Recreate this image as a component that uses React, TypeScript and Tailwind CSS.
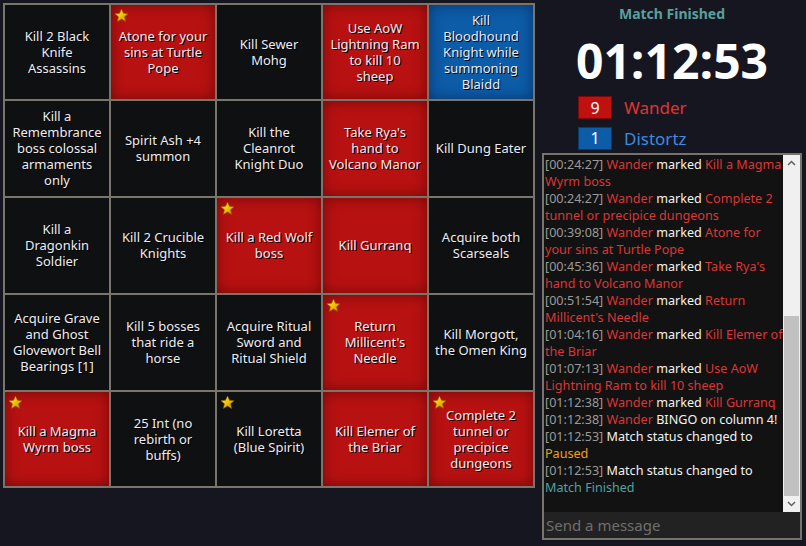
import React from "react";

type Cell = { lines: string[]; color: "black" | "red" | "blue"; star?: boolean };

const cells: Cell[] = [
  { lines: ["Kill 2 Black", "Knife", "Assassins"], color: "black" },
  { lines: ["Atone for your", "sins at Turtle", "Pope"], color: "red", star: true },
  { lines: ["Kill Sewer", "Mohg"], color: "black" },
  { lines: ["Use AoW", "Lightning Ram", "to kill 10", "sheep"], color: "red" },
  { lines: ["Kill", "Bloodhound", "Knight while", "summoning", "Blaidd"], color: "blue" },
  { lines: ["Kill a", "Remembrance", "boss colossal", "armaments", "only"], color: "black" },
  { lines: ["Spirit Ash +4", "summon"], color: "black" },
  { lines: ["Kill the", "Cleanrot", "Knight Duo"], color: "black" },
  { lines: ["Take Rya's", "hand to", "Volcano Manor"], color: "red" },
  { lines: ["Kill Dung Eater"], color: "black" },
  { lines: ["Kill a", "Dragonkin", "Soldier"], color: "black" },
  { lines: ["Kill 2 Crucible", "Knights"], color: "black" },
  { lines: ["Kill a Red Wolf", "boss"], color: "red", star: true },
  { lines: ["Kill Gurranq"], color: "red" },
  { lines: ["Acquire both", "Scarseals"], color: "black" },
  { lines: ["Acquire Grave", "and Ghost", "Glovewort Bell", "Bearings [1]"], color: "black" },
  { lines: ["Kill 5 bosses", "that ride a", "horse"], color: "black" },
  { lines: ["Acquire Ritual", "Sword and", "Ritual Shield"], color: "black" },
  { lines: ["Return", "Millicent's", "Needle"], color: "red", star: true },
  { lines: ["Kill Morgott,", "the Omen King"], color: "black" },
  { lines: ["Kill a Magma", "Wyrm boss"], color: "red", star: true },
  { lines: ["25 Int (no", "rebirth or", "buffs)"], color: "black" },
  { lines: ["Kill Loretta", "(Blue Spirit)"], color: "black", star: true },
  { lines: ["Kill Elemer of", "the Briar"], color: "red" },
  { lines: ["Complete 2", "tunnel or", "precipice", "dungeons"], color: "red", star: true },
];

const Star = () => (
  <svg width="15" height="15" viewBox="0 0 24 24" className="absolute left-[3px] top-[3px]">
    <defs>
      <linearGradient id="sg" x1="0" y1="0" x2="1" y2="1">
        <stop offset="0" stopColor="#fff6a0" />
        <stop offset="0.45" stopColor="#f5c800" />
        <stop offset="1" stopColor="#c98a00" />
      </linearGradient>
    </defs>
    <path
      d="M12 1.5l3.1 6.9 7.4.7-5.6 5 1.7 7.4L12 17.6l-6.6 3.9 1.7-7.4-5.6-5 7.4-.7z"
      fill="url(#sg)"
      stroke="#8a5a00"
      strokeWidth="1"
      strokeLinejoin="round"
    />
  </svg>
);

const bgFor = (c: Cell["color"]) =>
  c === "red"
    ? "bg-[#b81111] shadow-[inset_0_0_14px_rgba(60,0,0,0.55)]"
    : c === "blue"
    ? "bg-[#0d5ca8] shadow-[inset_0_0_14px_rgba(0,20,60,0.55)]"
    : "bg-[#0f1011]";

type Seg = { t: string; c: "ts" | "red" | "white" | "orange" | "teal" };
type Msg = Seg[][];

const msgs: Msg[] = [
  [[{ t: "[00:24:27] ", c: "ts" }, { t: "Wander ", c: "red" }, { t: "marked ", c: "white" }, { t: "Kill a Magma", c: "red" }], [{ t: "Wyrm boss", c: "red" }]],
  [[{ t: "[00:24:27] ", c: "ts" }, { t: "Wander ", c: "red" }, { t: "marked ", c: "white" }, { t: "Complete 2", c: "red" }], [{ t: "tunnel or precipice dungeons", c: "red" }]],
  [[{ t: "[00:39:08] ", c: "ts" }, { t: "Wander ", c: "red" }, { t: "marked ", c: "white" }, { t: "Atone for", c: "red" }], [{ t: "your sins at Turtle Pope", c: "red" }]],
  [[{ t: "[00:45:36] ", c: "ts" }, { t: "Wander ", c: "red" }, { t: "marked ", c: "white" }, { t: "Take Rya's", c: "red" }], [{ t: "hand to Volcano Manor", c: "red" }]],
  [[{ t: "[00:51:54] ", c: "ts" }, { t: "Wander ", c: "red" }, { t: "marked ", c: "white" }, { t: "Return", c: "red" }], [{ t: "Millicent's Needle", c: "red" }]],
  [[{ t: "[01:04:16] ", c: "ts" }, { t: "Wander ", c: "red" }, { t: "marked ", c: "white" }, { t: "Kill Elemer of", c: "red" }], [{ t: "the Briar", c: "red" }]],
  [[{ t: "[01:07:13] ", c: "ts" }, { t: "Wander ", c: "red" }, { t: "marked ", c: "white" }, { t: "Use AoW", c: "red" }], [{ t: "Lightning Ram to kill 10 sheep", c: "red" }]],
  [[{ t: "[01:12:38] ", c: "ts" }, { t: "Wander ", c: "red" }, { t: "marked ", c: "white" }, { t: "Kill Gurranq", c: "red" }]],
  [[{ t: "[01:12:38] ", c: "ts" }, { t: "Wander ", c: "red" }, { t: "BINGO on column 4!", c: "white" }]],
  [[{ t: "[01:12:53] ", c: "ts" }, { t: "Match status changed to", c: "white" }], [{ t: "Paused", c: "orange" }]],
  [[{ t: "[01:12:53] ", c: "ts" }, { t: "Match status changed to", c: "white" }], [{ t: "Match Finished", c: "teal" }]],
];

const segClass: Record<Seg["c"], string> = {
  ts: "text-[#9a9a9a]",
  red: "text-[#dc3636]",
  white: "text-[#f2f2f2]",
  orange: "text-[#f0a010]",
  teal: "text-[#4fa3a0]",
};

export default function App() {
  return (
    <div
      className="flex h-[546px] w-[806px] overflow-hidden bg-[#151620]"
      style={{ fontFamily: '"Noto Sans", "Open Sans", sans-serif' }}
    >
      <div className="ml-[3px] mt-[3px] self-start">
        <div className="grid grid-cols-[repeat(5,104px)] grid-rows-[94px_95px_95px_95px_94px] gap-[2px] bg-[#7a756b] p-[2px]">
          {cells.map((c, i) => (
            <div
              key={i}
              className={`relative flex items-center justify-center pb-[1px] text-center text-[13px] leading-[16px] text-[#ececf2] [text-shadow:1px_1px_0_#000] ${bgFor(c.color)}`}
            >
              {c.star && <Star />}
              <div>
                {c.lines.map((l, j) => (
                  <div key={j} className="whitespace-nowrap">
                    {l}
                  </div>
                ))}
              </div>
            </div>
          ))}
        </div>
      </div>

      <div className="ml-[7px] flex w-[260px] flex-col">
        <div className="mt-[5px] text-center text-[14px] font-bold leading-[18px] text-[#5aa09c]">Match Finished</div>
        <div
          className="mt-[10px] text-center text-[48px] font-bold leading-[56px] text-white"
          style={{ fontFamily: '"Open Sans", "Noto Sans", sans-serif' }}
        >
          01:12:53
        </div>
        <div className="ml-[36px] mt-[6px] flex flex-col gap-[5px]">
          <div className="flex items-center">
            <div className="flex h-[23px] w-[34px] items-center justify-center border border-[#7a0a0a] bg-[#c01111] text-[16px] text-white">9</div>
            <div className="ml-[12px] text-[17px] text-[#e03434]">Wander</div>
          </div>
          <div className="flex items-center">
            <div className="flex h-[23px] w-[34px] items-center justify-center border border-[#083a70] bg-[#0d5ca8] text-[16px] text-white">1</div>
            <div className="ml-[12px] text-[17px] text-[#3b8be0]">Distortz</div>
          </div>
        </div>

        <div className="mt-[2px] flex h-[387px] flex-col border-2 border-[#77736b] bg-[#121212]">
          <div className="flex min-h-0 flex-1">
            <div className="flex-1 pl-[1px] pt-[1px] text-[12.6px] leading-[17px]">
              {msgs.map((m, i) => (
                <div key={i}>
                  {m.map((line, j) => (
                    <div key={j} className="whitespace-nowrap">
                      {line.map((s, k) => (
                        <span key={k} className={segClass[s.c]}>
                          {s.t}
                        </span>
                      ))}
                    </div>
                  ))}
                </div>
              ))}
            </div>
            <div className="flex w-[17px] flex-col bg-[#f0f0f0]">
              <div className="flex h-[17px] items-center justify-center">
                <svg width="9" height="6" viewBox="0 0 9 6">
                  <path d="M1 5L4.5 1.5L8 5" stroke="#606060" strokeWidth="1.5" fill="none" />
                </svg>
              </div>
              <div className="flex-1 px-[1px]">
                <div className="mt-[145px] h-[180px] bg-[#c1c1c1]" />
              </div>
              <div className="flex h-[17px] items-center justify-center">
                <svg width="9" height="6" viewBox="0 0 9 6">
                  <path d="M1 1L4.5 4.5L8 1" stroke="#606060" strokeWidth="1.5" fill="none" />
                </svg>
              </div>
            </div>
          </div>
          <div className="h-[26px] bg-[#222222] pl-[2px] text-[15px] leading-[26px] text-[#6f6f6f]">Send a message</div>
        </div>
      </div>
    </div>
  );
}
